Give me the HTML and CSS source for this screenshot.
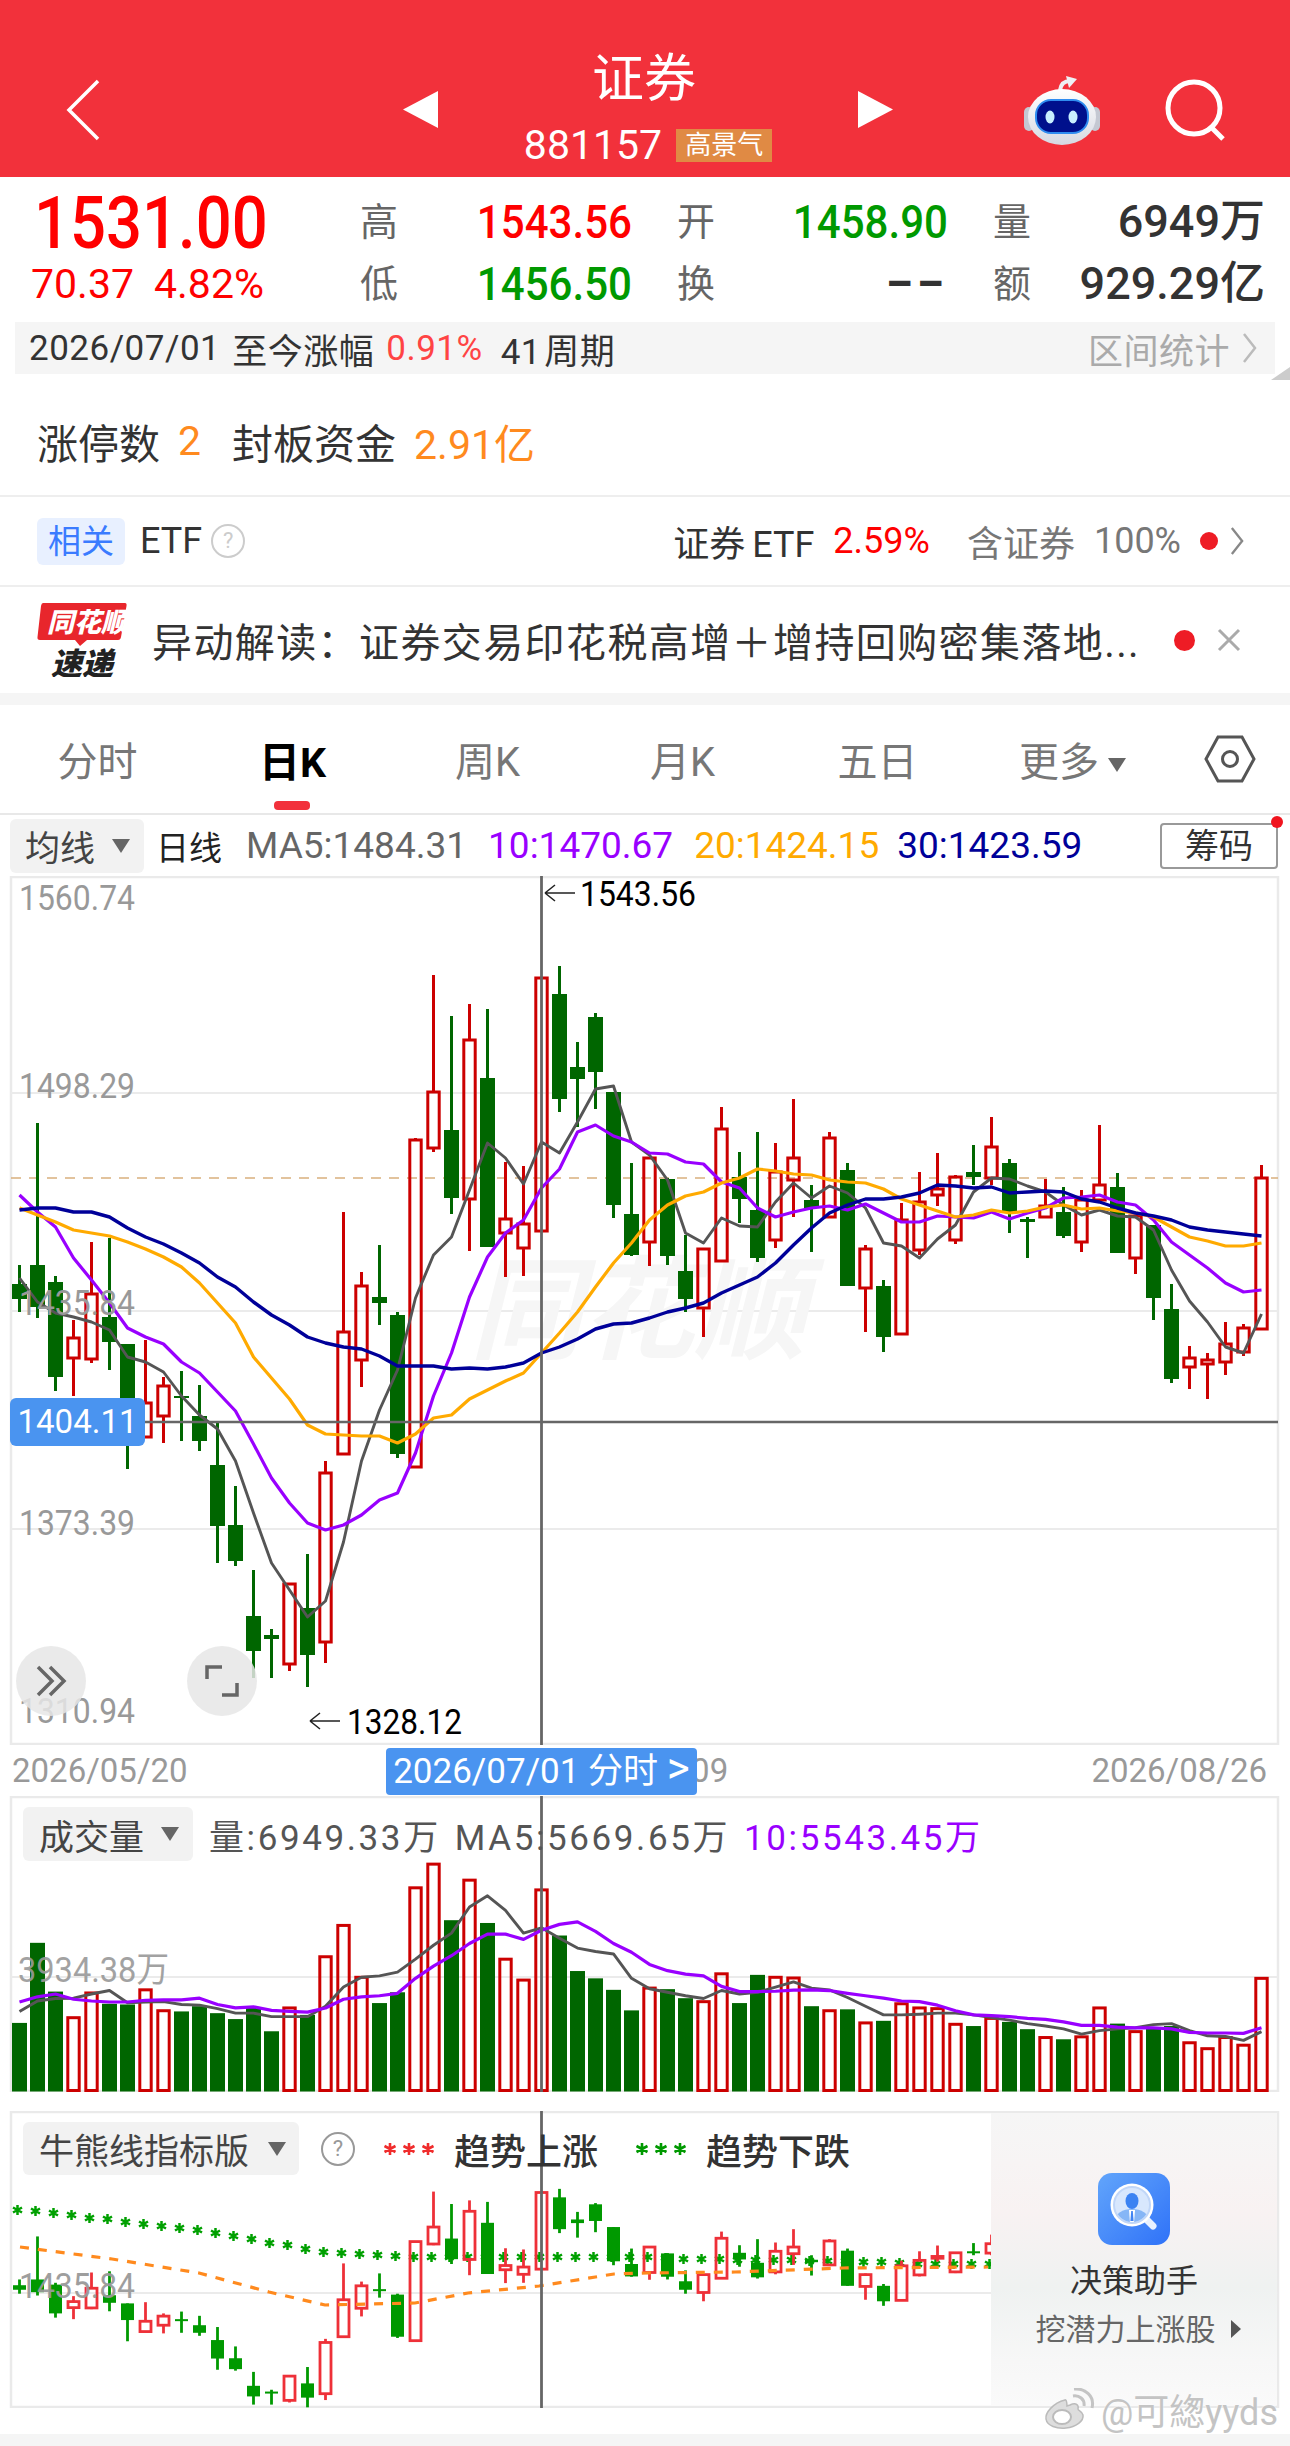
FILE: index.html
```html
<!DOCTYPE html>
<html lang="zh-CN">
<head>
    <meta charset="UTF-8">
    <title>证券 881157</title>
    <link rel="stylesheet" href="styles.css">
</head>
<body>
    <header class="nav">
        <svg class="nav-back" width="34" height="62" viewBox="0 0 34 62"><path d="M32 2L3 31l29 29"/></svg>
        <svg class="nav-tri" width="35" height="37" viewBox="0 0 35 37"><path d="M35 0v37L0 18.5z"/></svg>
        <div class="nav-center">
            <div class="nav-title">证券</div>
            <div class="nav-code">881157<span class="nav-badge">高景气</span></div>
        </div>
        <svg class="nav-tri" width="35" height="37" viewBox="0 0 35 37"><path d="M0 0v37l35-18.5z"/></svg>
        <div class="nav-tools">
            <svg width="78" height="70" viewBox="0 0 78 70">
                <defs><linearGradient id="robotHead" x1="0" y1="0" x2="0" y2="1"><stop offset="0" stop-color="#fff"/><stop offset="1" stop-color="#d6d9e2"/></linearGradient></defs>
                <path class="robot-ant" d="M36 15c1-6 4-9 10-9"/>
                <path d="M42 1l11 3-8 9z" fill="#eef0f4"/>
                <rect x="0" y="32" width="10" height="24" rx="5" fill="#c4c8d2"/>
                <rect x="66" y="32" width="10" height="24" rx="5" fill="#c4c8d2"/>
                <ellipse cx="38" cy="42" rx="34" ry="28" fill="url(#robotHead)"/>
                <rect x="12" y="25" width="52" height="33" rx="15" fill="#00108c" stroke="#2f8cf0" stroke-width="2"/>
                <ellipse cx="26" cy="42" rx="4.5" ry="6.5" fill="#c8f0ff"/>
                <ellipse cx="49" cy="42" rx="4.5" ry="6.5" fill="#c8f0ff"/>
            </svg>
            <svg class="nav-search" width="62" height="62" viewBox="0 0 62 62"><circle cx="30" cy="29" r="26"/><path d="M48 49l11 11"/></svg>
        </div>
    </header>

    <section class="quote">
        <div class="price">
            <div class="price-now">1531.00</div>
            <div class="price-chg"><span>70.37</span><span>4.82%</span></div>
        </div>
        <div class="q-label">高</div><div class="q-val up">1543.56</div>
        <div class="q-label">开</div><div class="q-val down">1458.90</div>
        <div class="q-label">量</div><div class="q-val q-wide">6949万</div>
        <div class="q-label">低</div><div class="q-val down">1456.50</div>
        <div class="q-label">换</div><div class="q-val q-none">––</div>
        <div class="q-label">额</div><div class="q-val q-wide">929.29亿</div>
    </section>

    <div class="strip">
        <span>2026/07/01</span><span>至今涨幅</span><span class="strip-pct">0.91%</span><span class="strip-weeks">41 周期</span>
        <span class="strip-more">区间统计</span>
        <svg class="chev" width="15" height="30" viewBox="0 0 15 30"><path d="M2 1l11 14L2 29"/></svg>
        <i class="strip-corner"></i>
    </div>

    <div class="limit">
        <span>涨停数</span><b>2</b><span class="limit-fund">封板资金</span><b>2.91亿</b>
    </div>

    <div class="etf">
        <span class="etf-tag">相关</span>
        <span class="etf-name">ETF</span>
        <span class="help help-light">?</span>
        <div class="etf-right">
            <span class="etf-fund">证券 ETF</span><span class="etf-pct">2.59%</span>
            <span class="etf-grey etf-gap">含证券</span><span class="etf-grey">100%</span>
            <i class="dot dot-small"></i>
            <svg class="chev chev-dark" width="14" height="28" viewBox="0 0 15 30"><path d="M2 1l11 14L2 29"/></svg>
        </div>
    </div>

    <div class="news">
        <svg class="news-logo" width="90" height="74" viewBox="0 0 90 74">
            <path d="M6 0h82q2 0 1.500 3L84 34q-.5 3-3 3H50l-7 6-5-6H3q-3 0-2.500-3L4 3q.5-3 2-3z" fill="#e8262c"/>
            <text class="logo-top" x="10" y="29">同花顺</text>
            <text class="logo-bot" x="14" y="72">速递</text>
        </svg>
        <span class="news-text">异动解读：证券交易印花税高增＋增持回购密集落地...</span>
        <i class="dot"></i>
        <svg class="news-close" width="26" height="26" viewBox="0 0 26 26"><path d="M3 3l20 20M23 3L3 23"/></svg>
    </div>

    <nav class="tabs">
        <a>分时</a>
        <a class="on">日K</a>
        <a>周K</a>
        <a>月K</a>
        <a>五日</a>
        <a>更多<i class="caret"></i></a>
        <svg width="52" height="48" viewBox="0 0 52 48"><path d="M14 2h24l12 22-12 22H14L2 24z"/><circle cx="26" cy="24" r="7.500"/></svg>
    </nav>

    <div class="ma-row">
        <span class="select select-ma">均线<i class="caret"></i></span>
        <span class="ma-day">日线</span>
        <span class="ma-5">MA5:1484.31</span>
        <span class="ma-10">10:1470.67</span>
        <span class="ma-20">20:1424.15</span>
        <span class="ma-30">30:1423.59</span>
        <span class="chips">筹码<i class="chips-dot"></i></span>
    </div>

    <section class="panel panel-main" id="mainPanel">
        <span class="last-tag">1404.11</span>
        <span class="round-btn round-left">
            <svg width="36" height="36" viewBox="0 0 36 36"><path d="M5 4l14 14L5 32M17 4l14 14-14 14"/></svg>
        </span>
        <span class="round-btn round-right">
            <svg width="36" height="36" viewBox="0 0 36 36"><path d="M3 16V4h15M33 20v12H18"/></svg>
        </span>
    </section>

    <div class="dates">
        <span>2026/05/20</span>
        <span class="dates-mid">2026/07/09</span>
        <span class="dates-end">2026/08/26</span>
        <span class="dates-pill">2026/07/01 分时 <b>&gt;</b></span>
    </div>

    <section class="panel panel-vol" id="volPanel">
        <div class="panel-head">
            <span class="select select-vol">成交量<i class="caret"></i></span>
            <span class="vol-text">量:6949.33万</span>
            <span class="vol-text">MA5:5669.65万</span>
            <span class="vol-text vol-purple">10:5543.45万</span>
        </div>
    </section>

    <section class="panel panel-bull" id="bullPanel">
        <div class="panel-head">
            <span class="select select-bull">牛熊线指标版<i class="caret"></i></span>
            <span class="help">?</span>
            <svg class="stars stars-red" width="52" height="14" viewBox="0 0 52 14"><path d="M7 1v12M1.500 4l11 6M1.500 10l11-6M26 1v12M20.500 4l11 6M20.500 10l11-6M45 1v12M39.500 4l11 6M39.500 10l11-6"/></svg>
            <span class="trend">趋势上涨</span>
            <svg class="stars stars-green" width="52" height="14" viewBox="0 0 52 14"><path d="M7 1v12M1.500 4l11 6M1.500 10l11-6M26 1v12M20.500 4l11 6M20.500 10l11-6M45 1v12M39.500 4l11 6M39.500 10l11-6"/></svg>
            <span class="trend">趋势下跌</span>
        </div>
        <aside class="promo">
            <svg class="promo-icon" width="72" height="72" viewBox="0 0 72 72">
                <defs>
                    <linearGradient id="promoBg" x1="0" y1="0" x2="1" y2="1"><stop offset="0" stop-color="#62a5fb"/><stop offset="1" stop-color="#2f72f8"/></linearGradient>
                    <clipPath id="promoLens"><circle cx="34" cy="32" r="17"/></clipPath>
                </defs>
                <rect width="72" height="72" rx="14" fill="url(#promoBg)"/>
                <path d="M48 46l7 7" stroke="#e8f1ff" stroke-width="7" stroke-linecap="round"/>
                <circle cx="34" cy="32" r="21.500" fill="#fff"/>
                <circle cx="34" cy="32" r="18" fill="#d8e7fd" stroke="#c0d6f8" stroke-width="2"/>
                <g clip-path="url(#promoLens)">
                    <ellipse cx="34" cy="47" rx="17" ry="11" fill="#86b6f6"/>
                    <path d="M31 37h6l-1 13h-4z" fill="#fff"/>
                    <path d="M33.200 38h1.600l.8 10h-3.200z" fill="#3f84f3"/>
                </g>
                <ellipse cx="34" cy="28" rx="6.500" ry="8" fill="#3b82f2"/>
            </svg>
            <div class="promo-title">决策助手</div>
            <div class="promo-sub">挖潜力上涨股<i class="promo-arrow"></i></div>
        </aside>
    </section>

    <div class="footer-band">
        <div class="mark">
            <svg width="52" height="42" viewBox="0 0 52 42">
                <path class="mark-body" d="M22 12C10 15 2 25 3 31c1 7 11 10 20 9 10-1 18-7 17-13-1-4-5-4-5-6 1-4-2-7-8-4l-3 1c0-4-1-7-2-6z"/>
                <ellipse class="mark-eye" cx="19" cy="29" rx="9" ry="7"/>
                <path class="mark-wave" d="M30 8c6-1 12 3 11 10M31 1c11-1 21 7 18 19"/>
            </svg>
            <span>@可緫yyds</span>
        </div>
    </div>

    <script src="chart.js"></script>
</body>
</html>
```
FILE: styles.css
```css
*{
    box-sizing:border-box;
}
body{
    margin:0;
    width:1290px;
    background-color:#fff;
    font-family:Roboto,"Noto Sans CJK SC",sans-serif;
    color:#333;
}
i{
    display:inline-block;
}

/* top bar */
.nav{
    height:177px;
    background-color:#f2313b;
    padding-top:42px;
    display:grid;
    grid-template-columns:403px 35px 420px 35px 1fr;
    align-items:center;
    color:#fff;
}
.nav-back{
    margin-left:66px;
    fill:none;
    stroke:#fff;
    stroke-width:3.500;
}
.nav-tri{
    fill:#fff;
}
.nav-center{
    align-self:start;
    text-align:center;
}
.nav-title{
    margin:3px 8px 0 0;
    font-size:52px;
    line-height:70px;
}
.nav-code{
    margin-top:12px;
    height:36px;
    display:flex;
    justify-content:center;
    align-items:center;
    gap:14px;
    font-size:41px;
}
.nav-badge{
    background-color:#e08a44;
    font-size:26px;
    line-height:33px;
    padding:0 9px;
}
.nav-tools{
    padding-left:131px;
    display:flex;
    align-items:center;
    gap:62px;
}
.robot-ant{
    fill:none;
    stroke:#eef0f4;
    stroke-width:4;
}
.nav-search{
    fill:none;
    stroke:#fff;
    stroke-width:5;
}

/* quote block, the digits of this app are taller and narrower than Roboto */
.quote{
    height:145px;
    padding-top:14px;
    display:grid;
    grid-template-columns:315px 105px 212px 105px 211px 105px 212px;
    grid-template-rows:62px 62px;
}
.price{
    grid-row:1 / span 2;
    padding-left:34px;
    white-space:nowrap;
}
.price-now{
    color:#f00;
    font-size:72px;
    font-weight:500;
    line-height:72px;
    margin-top:-3px;
    transform:scaleX(.88);
    transform-origin:left center;
}
.price-chg{
    color:#f00;
    font-size:41px;
    line-height:48px;
    margin-left:-3px;
    display:flex;
    gap:20px;
}
.q-label{
    padding-left:45px;
    font-size:38px;
    line-height:62px;
    color:#666;
}
.q-val{
    font-size:47px;
    font-weight:500;
    line-height:62px;
    text-align:right;
    transform:scaleX(.895);
    transform-origin:right center;
}
.q-wide{
    transform:none;
    font-size:45px;
}
.q-none{
    letter-spacing:5px;
    font-weight:700;
}
.up{
    color:#f00;
}
.down{
    color:#090;
}

.strip{
    position:relative;
    height:52px;
    margin:0 15px;
    padding:0 18px 0 14px;
    background-color:#f5f5f5;
    display:flex;
    align-items:center;
    gap:12px;
    font-size:35px;
    letter-spacing:.5px;
}
.strip-pct{
    color:#f44;
}
.strip-weeks{
    margin-left:6px;
    word-spacing:-6px;
}
.strip-more{
    margin-left:auto;
    color:#aaa;
}
.chev{
    fill:none;
    stroke:#bbb;
    stroke-width:2.500;
}
.chev-dark{
    stroke:#888;
}
.strip-corner{
    position:absolute;
    right:-15px;
    bottom:-6px;
    border-style:solid;
    border-width:0 0 13px 19px;
    border-color:transparent transparent #ccc transparent;
}

.limit{
    height:123px;
    padding:12px 0 0 37px;
    border-bottom:2px solid #eee;
    display:flex;
    align-items:center;
    font-size:41px;
}
.limit b{
    font-weight:400;
    color:#ff8a1e;
    margin-left:18px;
}
.limit-fund{
    margin-left:31px;
}

.etf{
    height:90px;
    padding:0 46px 0 37px;
    border-bottom:2px solid #eee;
    display:flex;
    align-items:center;
    font-size:36px;
}
.etf-tag{
    width:88px;
    height:47px;
    line-height:47px;
    text-align:center;
    border-radius:6px;
    background-color:#e8f0ff;
    color:#3a7bff;
    font-size:33px;
    margin-right:15px;
}
.etf-name{
    margin-right:9px;
}
.help{
    width:34px;
    height:34px;
    line-height:30px;
    text-align:center;
    border:2px solid #999;
    border-radius:50%;
    color:#999;
    font-size:22px;
}
.help-light{
    border-color:#ccc;
    color:#ccc;
}
.etf-right{
    margin-left:auto;
    display:flex;
    align-items:center;
    gap:19px;
}
.etf-fund{
    word-spacing:-2px;
}
.etf-pct{
    color:#f00;
}
.etf-grey{
    color:#777;
}
.etf-gap{
    margin-left:18px;
}
.dot{
    width:21px;
    height:21px;
    border-radius:50%;
    background-color:#ee1c25;
}
.dot-small{
    width:18px;
    height:18px;
    margin-right:-7px;
}

.news{
    height:106px;
    padding:0 48px 0 37px;
    display:flex;
    align-items:center;
    font-size:40px;
}
.news-logo{
    flex:none;
    margin-right:25px;
}
.logo-top{
    font-size:27px;
    font-weight:900;
    font-style:italic;
    fill:#fff;
}
.logo-bot{
    font-size:31px;
    font-weight:900;
    font-style:italic;
    fill:#222;
}
.news-text{
    white-space:nowrap;
    letter-spacing:1.400px;
}
.news .dot{
    margin-left:auto;
}
.news-close{
    margin-left:21px;
    fill:none;
    stroke:#aaa;
    stroke-width:3;
}

/* period tabs */
.tabs{
    height:122px;
    border-top:12px solid #f5f5f5;
    border-bottom:2px solid #e8e8e8;
    display:grid;
    grid-template-columns:repeat(6,195px) 1fr;
    align-items:center;
    justify-items:center;
    font-size:40px;
    color:#777;
}
.tabs a{
    position:relative;
}
.tabs .on{
    color:#000;
    font-size:41px;
    font-weight:700;
}
.tabs .on::after{
    content:"";
    position:absolute;
    left:50%;
    bottom:-21px;
    width:36px;
    height:9px;
    margin-left:-18px;
    border-radius:4px;
    background-color:#f2313b;
}
.tabs svg{
    fill:none;
    stroke:#555;
    stroke-width:3;
}
.caret{
    width:0;
    height:0;
    margin-left:9px;
    vertical-align:middle;
    border-style:solid;
    border-width:14px 9px 0 9px;
    border-color:#666 transparent transparent transparent;
}

.ma-row{
    height:61px;
    padding:0 12px 0 10px;
    display:flex;
    align-items:center;
    gap:21px;
    font-size:37px;
}
.select{
    display:flex;
    align-items:center;
    justify-content:space-between;
    border-radius:6px;
    background-color:#f2f2f2;
    color:#444;
    font-size:35px;
}
.select-ma{
    width:134px;
    height:54px;
    padding:0 14px 0 15px;
    margin-right:-6px;
}
.ma-day{
    font-size:33px;
    color:#222;
    margin:0 3px 0 -3px;
}
.ma-5{
    color:#666;
}
.ma-10{
    color:#90f;
}
.ma-20{
    color:#fa0;
}
.ma-30{
    color:#009;
    margin-left:-3px;
}
.chips{
    position:relative;
    margin-left:auto;
    width:118px;
    height:46px;
    line-height:42px;
    text-align:center;
    border:2px solid #999;
    border-radius:4px;
    font-size:34px;
}
.chips-dot{
    position:absolute;
    right:-7px;
    top:-9px;
    width:12px;
    height:12px;
    border-radius:50%;
    background-color:#f0141e;
}

/* chart panels, the svg inside is filled by chart.js */
.panel{
    position:relative;
}
.panel > svg{
    display:block;
}
.panel-main{
    height:869px;
}
.panel-vol{
    height:296px;
}
.panel-bull{
    height:297px;
    margin-top:19px;
}
.axis-label{
    font-size:35px;
    fill:#999;
}
.mark-label{
    font-size:35px;
    fill:#000;
}
.chart-water{
    font-size:112px;
    font-weight:700;
    font-style:italic;
    fill:#f6f6f6;
}
.last-tag{
    position:absolute;
    left:10px;
    top:522px;
    width:135px;
    height:48px;
    line-height:48px;
    text-align:center;
    border-radius:6px;
    background-color:#4a94f0;
    color:#fff;
    font-size:33px;
}
.round-btn{
    position:absolute;
    top:770px;
    width:70px;
    height:70px;
    border-radius:50%;
    background-color:rgba(230,230,230,.85);
    display:flex;
    align-items:center;
    justify-content:center;
}
.round-left{
    left:16px;
}
.round-right{
    left:187px;
}
.round-btn svg{
    fill:none;
    stroke:#666;
    stroke-width:3.500;
}

.dates{
    position:relative;
    height:51px;
    padding:0 23px 0 12px;
    display:flex;
    align-items:center;
    font-size:33px;
    color:#999;
}
.dates-mid{
    margin-left:365px;
}
.dates-end{
    margin-left:auto;
}
.dates-pill{
    position:absolute;
    left:386px;
    top:3px;
    width:311px;
    height:47px;
    line-height:47px;
    text-align:center;
    border-radius:4px;
    background-color:#4a94f0;
    color:#fff;
    font-size:35px;
}
.dates-pill b{
    font-weight:400;
    font-size:44px;
    line-height:0;
}

.panel-head{
    position:absolute;
    left:23px;
    top:11px;
    display:flex;
    align-items:center;
}
.select-vol{
    width:170px;
    height:54px;
    padding:0 14px 0 16px;
}
.vol-text{
    margin-left:16px;
    font-size:35px;
    letter-spacing:2.600px;
    color:#555;
}
.vol-text + .vol-text{
    margin-left:14px;
}
.vol-purple{
    color:#90f;
}
.select-bull{
    width:276px;
    height:53px;
    padding:0 13px 0 16px;
}
.panel-bull .help{
    margin-left:22px;
}
.stars{
    fill:none;
    stroke-width:2.600;
}
.stars-red{
    margin-left:28px;
    stroke:#f02c2c;
}
.stars-green{
    margin-left:37px;
    stroke:#090;
}
.trend{
    margin-left:19px;
    font-size:36px;
    font-weight:500;
    color:#333;
}

.promo{
    position:absolute;
    left:991px;
    top:2px;
    width:286px;
    height:292px;
    padding-top:60px;
    background:linear-gradient(180deg,#f6f6f6 0,#f8f2f2 34%,#eff2f1 60%,#f7f7f7 85%,#fafafa 100%);
    display:flex;
    flex-direction:column;
    align-items:center;
}
.promo-title{
    margin-top:15px;
    font-size:32px;
    line-height:42px;
}
.promo-sub{
    margin-top:8px;
    margin-left:8px;
    font-size:30px;
    line-height:40px;
    color:#666;
}
.promo-arrow{
    margin-left:15px;
    vertical-align:2px;
    border-style:solid;
    border-width:9px 0 9px 10px;
    border-color:transparent transparent transparent #555;
}

.footer-band{
    position:relative;
    height:12px;
    margin-top:26px;
    background-color:#f5f5f5;
}
.mark{
    position:absolute;
    right:12px;
    bottom:11px;
    display:flex;
    align-items:center;
    gap:6px;
    font-size:36px;
    color:#c4c4c4;
    text-shadow:0 0 2px #fff;
}
.mark-body{
    fill:#ddd;
    stroke:#bbb;
    stroke-width:1.500;
}
.mark-eye{
    fill:#fff;
    stroke:#bbb;
    stroke-width:2;
}
.mark-wave{
    fill:none;
    stroke:#c4c4c4;
    stroke-width:3;
}
```
FILE: chart.js
```js
// [type, high, bodyTop, bodyBottom, low], y values are page pixels of the main panel
var candles = [
    ["g",1265,1284,1299,1312],["g",1123,1265,1307,1318],["g",1276,1282,1377,1391],["r",1320,1338,1358,1396],
    ["r",1242,1294,1359,1363],["g",1238,1317,1342,1370],["g",1344,1344,1399,1469],["r",1340,1403,1437,1437],
    ["r",1377,1386,1416,1443],["g",1371,1396,1398,1441],["g",1385,1416,1441,1451],["g",1422,1465,1526,1563],
    ["g",1486,1525,1561,1566],["g",1570,1616,1651,1678],["g",1629,1635,1639,1678],["r",1583,1584,1664,1671],
    ["g",1554,1608,1655,1687],["r",1461,1473,1642,1663],["r",1212,1332,1454,1454],["r",1272,1286,1360,1387],
    ["g",1245,1297,1303,1325],["g",1312,1315,1454,1458],["r",1138,1140,1467,1467],["r",975,1092,1148,1152],
    ["g",1016,1130,1198,1214],["r",1004,1040,1199,1251],["g",1009,1078,1247,1247],["r",1162,1219,1233,1277],
    ["r",1166,1224,1248,1276],["r",978,978,1231,1231],["g",966,994,1099,1112],["g",1042,1067,1079,1127],
    ["g",1013,1017,1072,1109],["g",1092,1092,1205,1218],["g",1163,1214,1255,1256],["r",1158,1158,1242,1266],
    ["g",1178,1179,1256,1265],["g",1235,1271,1299,1312],["r",1249,1249,1308,1337],["r",1107,1129,1261,1261],
    ["g",1152,1177,1199,1223],["g",1132,1210,1258,1262],["r",1143,1172,1240,1248],["r",1099,1158,1180,1217],
    ["g",1185,1200,1208,1252],["r",1132,1138,1217,1217],["g",1163,1170,1286,1286],["r",1245,1249,1288,1332],
    ["g",1280,1286,1337,1352],["r",1203,1220,1334,1334],["r",1172,1202,1250,1255],["r",1153,1189,1195,1206],
    ["r",1175,1177,1240,1244],["g",1145,1172,1177,1185],["r",1117,1147,1178,1185],["g",1159,1163,1212,1233],
    ["g",1217,1219,1222,1258],["r",1179,1206,1217,1217],["g",1187,1212,1236,1238],["r",1190,1200,1242,1252],
    ["r",1125,1185,1200,1200],["g",1173,1187,1253,1253],["r",1215,1216,1258,1274],["g",1225,1225,1298,1320],
    ["g",1284,1309,1379,1383],["r",1346,1358,1367,1389],["r",1353,1360,1364,1399],["r",1322,1344,1362,1375],
    ["r",1324,1328,1352,1356],["r",1165,1178,1329,1329]
];

var ma5 = [1278,1302,1313,1317,1322,1330,1357,1362,1372,1396,1415,1429,1461,1513,1563,1590,1617,1601,1542,1461,1410,1370,1298,1255,1237,1190,1143,1158,1184,1142,1153,1122,1089,1086,1142,1155,1180,1233,1243,1218,1226,1227,1202,1183,1198,1186,1193,1208,1243,1246,1258,1239,1225,1192,1178,1179,1186,1192,1205,1215,1210,1216,1217,1230,1270,1301,1322,1347,1353,1314];
var ma10 = [1195,1212,1227,1258,1280,1303,1328,1337,1344,1362,1373,1392,1411,1444,1478,1503,1523,1530,1525,1515,1500,1493,1453,1396,1353,1297,1257,1233,1220,1188,1169,1132,1125,1136,1142,1153,1154,1162,1164,1182,1188,1208,1217,1212,1208,1206,1210,1204,1213,1222,1222,1216,1217,1218,1212,1219,1213,1208,1198,1197,1195,1202,1205,1220,1242,1255,1268,1283,1292,1290];
var ma20 = [1208,1215,1222,1230,1233,1236,1242,1249,1257,1267,1283,1303,1323,1357,1378,1399,1425,1434,1435,1436,1436,1443,1434,1418,1415,1399,1390,1381,1373,1353,1333,1312,1287,1263,1243,1220,1205,1196,1192,1183,1178,1169,1171,1174,1175,1180,1182,1183,1189,1199,1205,1211,1217,1215,1210,1213,1211,1207,1205,1209,1208,1211,1213,1217,1227,1237,1241,1246,1246,1243];
var ma30 = [1210,1208,1208,1212,1212,1217,1228,1237,1244,1253,1263,1277,1287,1302,1315,1325,1337,1343,1347,1349,1356,1366,1366,1366,1369,1368,1369,1367,1363,1353,1347,1339,1329,1324,1323,1318,1312,1308,1303,1293,1285,1277,1263,1245,1228,1213,1205,1199,1199,1197,1193,1185,1186,1188,1187,1193,1192,1191,1192,1199,1202,1208,1213,1216,1220,1227,1230,1232,1234,1236];

// volume panel values, read off a 2.872x crop starting at y=1900
var volTop = [353,123,263,338,267,298,300,258,318,320,305,325,342,310,377,310,330,163,73,222,296,265,-35,-103,58,-57,66,170,230,-29,102,204,225,258,317,253,256,282,292,212,296,215,222,224,305,318,314,353,347,298,310,312,357,362,340,350,371,395,400,393,310,355,378,365,362,410,427,395,417,225];
var volMa5 = [320,290,283,282,270,260,295,293,292,300,302,312,325,325,335,335,335,305,250,222,218,207,170,130,95,20,-12,30,95,80,110,138,148,155,225,255,265,275,283,260,270,265,250,235,253,258,280,305,330,330,328,325,325,330,338,345,355,362,370,385,375,370,367,358,355,375,390,392,403,378];
var volMa10 = [293,278,270,285,290,293,293,288,287,287,282,300,310,307,317,320,322,310,285,278,275,268,225,190,160,125,98,98,113,87,70,63,90,125,150,185,203,213,218,248,263,263,262,259,258,260,268,275,282,290,292,302,318,330,332,335,340,343,350,360,360,365,367,367,370,380,382,382,383,367];
var starTop = [2210,2211,2213,2215,2218,2219,2222,2224,2226,2228,2230,2233,2236,2239,2243,2245,2249,2252,2253,2254,2255,2256,2257,2257,2257,2257,2257,2257,2257,2257,2257,2257,2257,2257,2257,2257,2258,2259,2259,2259,2260,2260,2260,2260,2261,2261,2261,2262,2262,2263,2264,2264,2264,2264,2264];

var NS = "http://www.w3.org/2000/svg";
var CROSS_X = 541.5, CROSS_Y = 1422;

function xAt(i){
    return 19.5 + 18 * i;
}
function volY(v){
    return 1900 + v * 0.3482;
}
function bullY(y){
    return 2192.5 + (y - 978) * 0.303;
}

function el(parent, name, attrs, text){
    var n = document.createElementNS(NS, name);
    for(var k in attrs) n.setAttribute(k, attrs[k]);
    if(text) n.textContent = text;
    parent.appendChild(n);
    return n;
}

// viewBox uses page coordinates so every panel reads the same numbers
function makeSvg(id, top, height){
    var box = document.getElementById(id);
    var svg = document.createElementNS(NS, "svg");
    svg.setAttribute("width", 1290);
    svg.setAttribute("height", height);
    svg.setAttribute("viewBox", "0 " + top + " 1290 " + height);
    box.insertBefore(svg, box.firstChild);
    return svg;
}

function hline(svg, y, color, w, dash, x2){
    var a = {x1:11, y1:y, x2:x2 || 1278, y2:y, stroke:color, "stroke-width":w};
    if(dash) a["stroke-dasharray"] = dash;
    el(svg, "line", a);
}

function frame(svg, top, bottom){
    el(svg, "line", {x1:11, y1:top, x2:11, y2:bottom, stroke:"#eaeaea", "stroke-width":2.5});
    el(svg, "line", {x1:1278, y1:top, x2:1278, y2:bottom, stroke:"#eaeaea", "stroke-width":2.5});
    hline(svg, top + 1, "#eaeaea", 2.5);
    hline(svg, bottom - 1, "#eaeaea", 2.5);
}

function polyline(svg, xs, ys, color, w){
    var pts = [];
    for(var i = 0; i < ys.length; i++) pts.push(xs(i) + "," + ys[i]);
    el(svg, "polyline", {points:pts.join(" "), fill:"none", stroke:color, "stroke-width":w, "stroke-linejoin":"round"});
}

function drawCandle(svg, i, c, map, red, green, rw, gw, sw){
    var x = xAt(i);
    var hi = map(c[1]), top = map(c[2]), bot = map(c[3]), lo = map(c[4]);
    if(c[0] == "r"){
        el(svg, "line", {x1:x, y1:hi, x2:x, y2:top, stroke:red, "stroke-width":sw});
        el(svg, "line", {x1:x, y1:bot, x2:x, y2:lo, stroke:red, "stroke-width":sw});
        el(svg, "rect", {x:x - rw, y:top, width:rw * 2, height:bot - top, fill:"none", stroke:red, "stroke-width":sw});
    }else{
        el(svg, "line", {x1:x, y1:hi, x2:x, y2:lo, stroke:green, "stroke-width":sw});
        el(svg, "rect", {x:x - gw, y:top, width:gw * 2, height:Math.max(bot - top, 2), fill:green});
    }
}

function star(svg, x, y){
    var d = "M" + x + " " + (y - 5) + "v10M" + (x - 4.5) + " " + (y - 2.5) + "l9 5M" + (x - 4.5) + " " + (y + 2.5) + "l9-5";
    el(svg, "path", {d:d, fill:"none", stroke:"#00a000", "stroke-width":2.5});
}

// app digits are narrow, so the labels are pressed to the width they have there
function label(svg, x, y, cls, text, width, extra){
    var a = {x:x, y:y, "class":cls, textLength:width, lengthAdjust:"spacingAndGlyphs"};
    for(var k in extra) a[k] = extra[k];
    el(svg, "text", a, text);
}

function drawMain(){
    var svg = makeSvg("mainPanel", 876, 869);
    frame(svg, 876, 1745);
    hline(svg, 1093, "#ebebeb", 2);
    hline(svg, 1311, "#ebebeb", 2);
    hline(svg, 1529, "#ebebeb", 2);
    hline(svg, 1178, "#d9b07e", 1.5, "10 8");
    el(svg, "text", {x:470, y:1350, "class":"chart-water"}, "同花顺");

    candles.forEach(function(c, i){
        drawCandle(svg, i, c, Number, "#c00", "#060", 5.7, 7.5, 3);
    });

    polyline(svg, xAt, ma5, "#555", 2.9);
    polyline(svg, xAt, ma10, "#90f", 3.2);
    polyline(svg, xAt, ma20, "#fa0", 3.2);
    polyline(svg, xAt, ma30, "#009", 3.4);

    el(svg, "line", {x1:CROSS_X, y1:876, x2:CROSS_X, y2:1748, stroke:"#666", "stroke-width":2.8});
    hline(svg, CROSS_Y, "#666", 2.4);

    [["1560.74",910],["1498.29",1098],["1435.84",1315],["1373.39",1535],["1310.94",1723]].forEach(function(a){
        label(svg, 19, a[1], "axis-label", a[0], 116);
    });

    var head = "M0 0l10-8M0 0l10 8M0 0h30";
    el(svg, "path", {d:head, fill:"none", stroke:"#222", "stroke-width":1.6, transform:"translate(545 893)"});
    label(svg, 580, 906, "mark-label", "1543.56", 116);
    el(svg, "path", {d:head, fill:"none", stroke:"#222", "stroke-width":1.6, transform:"translate(310 1721)"});
    label(svg, 347, 1734, "mark-label", "1328.12", 115);
}

function drawVol(){
    var svg = makeSvg("volPanel", 1796, 296);
    frame(svg, 1796, 2092);
    hline(svg, 1977, "#ebebeb", 2);
    candles.forEach(function(c, i){
        var x = xAt(i), y = volY(volTop[i]);
        if(c[0] == "r"){
            el(svg, "rect", {x:x - 5.7, y:y, width:11.4, height:2090.5 - y, fill:"none", stroke:"#c00", "stroke-width":3});
        }else{
            el(svg, "rect", {x:x - 7.5, y:y, width:15, height:2091.5 - y, fill:"#060"});
        }
    });
    polyline(svg, xAt, volMa5.map(volY), "#555", 2.9);
    polyline(svg, xAt, volMa10.map(volY), "#90f", 3.2);
    el(svg, "line", {x1:CROSS_X, y1:1796, x2:CROSS_X, y2:2092, stroke:"#666", "stroke-width":2.8});
    label(svg, 18, 1982, "axis-label", "3934.38万", 151, {opacity:.9});
}

function drawBull(){
    var svg = makeSvg("bullPanel", 2111, 297);
    frame(svg, 2111, 2408);
    hline(svg, 2293, "#ebebeb", 2);

    starTop.forEach(function(y, i){
        star(svg, xAt(i) - 2, y);
    });
    candles.forEach(function(c, i){
        drawCandle(svg, i, c, bullY, "#ee3038", "#090", 5.5, 6.5, 2.8);
    });
    el(svg, "polyline", {
        points:"20,2247 112,2259 199,2273 269,2292 325,2305 415,2303 468,2293 539,2286 614,2274 648,2273 735,2272 843,2268 988,2267",
        fill:"none", stroke:"#ff8a1e", "stroke-width":3.2, "stroke-dasharray":"9 9"
    });
    el(svg, "line", {x1:CROSS_X, y1:2111, x2:CROSS_X, y2:2408, stroke:"#666", "stroke-width":2.8});
    label(svg, 19, 2298, "axis-label", "1435.84", 116, {opacity:.95});
}

drawMain();
drawVol();
drawBull();
```
